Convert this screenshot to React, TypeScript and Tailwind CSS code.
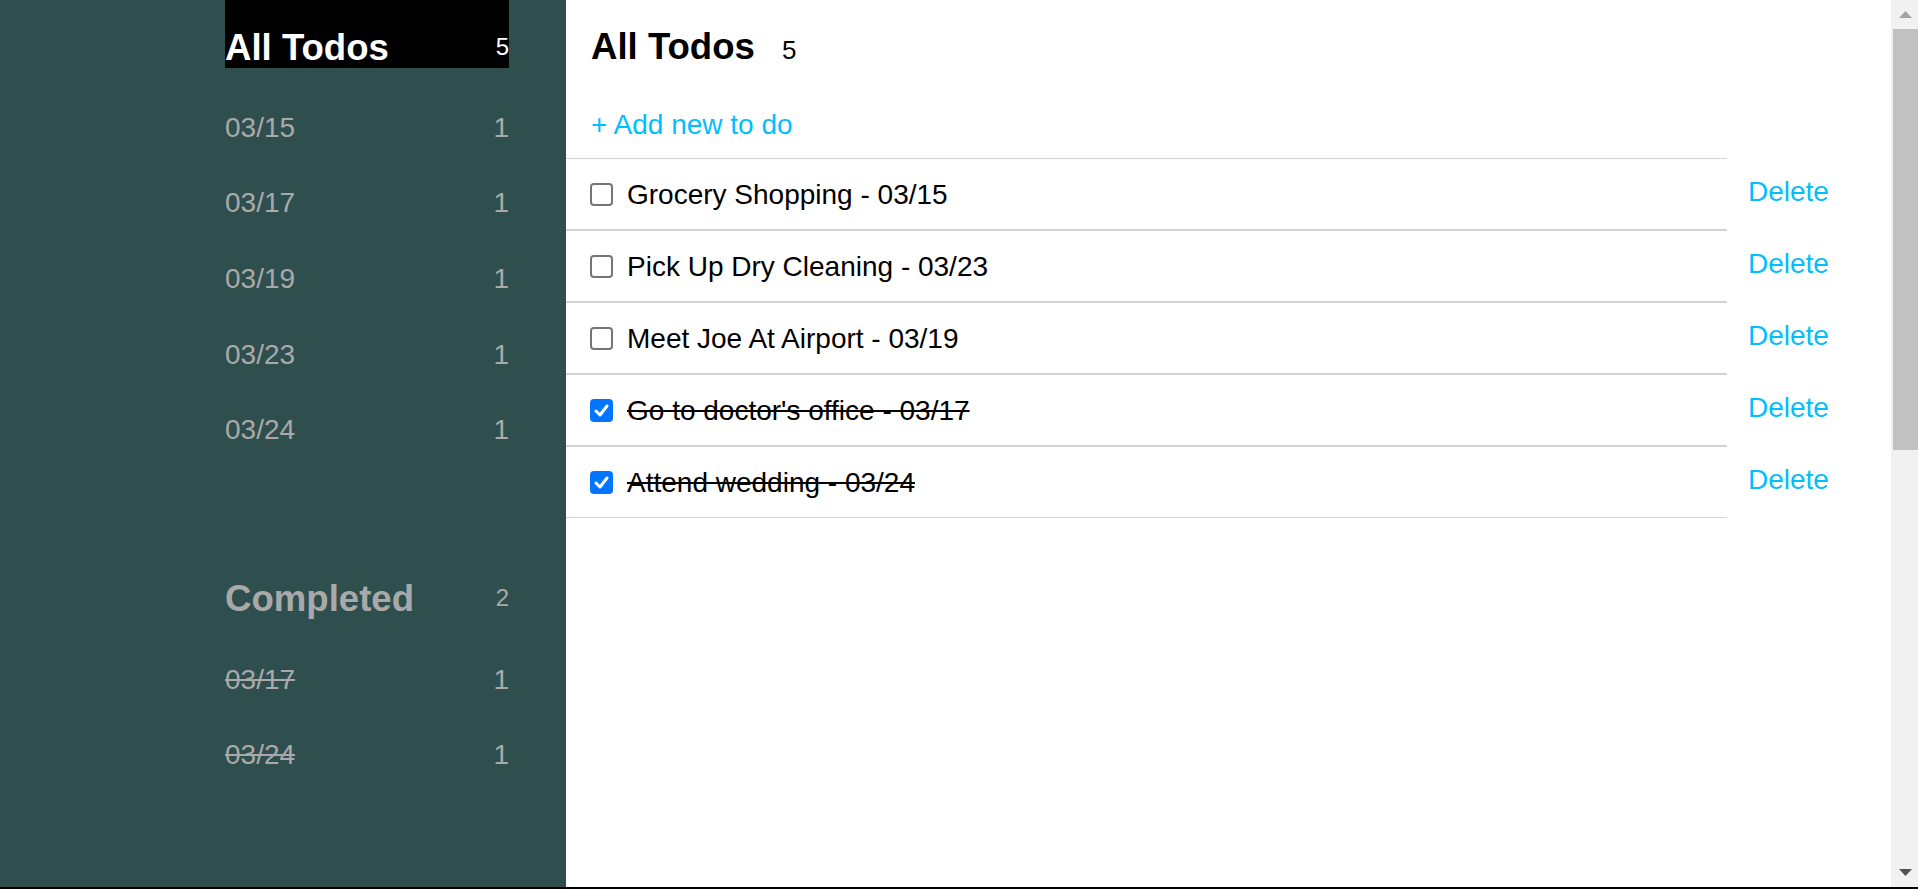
import React from "react";

const dates: [string, number][] = [
  ["03/15", 1],
  ["03/17", 1],
  ["03/19", 1],
  ["03/23", 1],
  ["03/24", 1],
];

const completed: [string, number][] = [
  ["03/17", 1],
  ["03/24", 1],
];

const todos = [
  { text: "Grocery Shopping - 03/15", done: false },
  { text: "Pick Up Dry Cleaning - 03/23", done: false },
  { text: "Meet Joe At Airport - 03/19", done: false },
  { text: "Go to doctor's office - 03/17", done: true },
  { text: "Attend wedding - 03/24", done: true },
];

function Check({ checked }: { checked: boolean }) {
  if (checked) {
    return (
      <span className="w-[23px] h-[23px] shrink-0 rounded-[4px] bg-[#0075ff] flex items-center justify-center">
        <svg width="17" height="17" viewBox="0 0 17 17" fill="none">
          <path d="M3 9 L7 13 L14 4" stroke="white" strokeWidth="3" strokeLinecap="round" strokeLinejoin="round" />
        </svg>
      </span>
    );
  }
  return <span className="w-[23px] h-[23px] shrink-0 rounded-[4px] border-2 border-[#767676] bg-white" />;
}

export default function App() {
  return (
    <div className="h-[889px] w-[1918px] flex flex-col overflow-hidden bg-white font-['Liberation_Sans','Arial',sans-serif]">
      <div className="flex flex-1 min-h-0">
        <aside className="w-[566px] shrink-0 bg-[#2f4f4f] pl-[225px] pr-[57px]">
          <div className="h-[68px] bg-black flex items-center justify-between pt-[26px]">
            <span className="text-[36.6px] leading-[41px] font-bold text-white">All Todos</span>
            <span className="text-[24px] leading-[28px] text-white">5</span>
          </div>
          <ul className="mt-[21px]">
            {dates.map(([d, n]) => (
              <li key={d} className="h-[75.6px] pt-[2px] flex items-center justify-between text-[28px] leading-[32px] text-[#a9a9a9]">
                <span>{d}</span>
                <span>{n}</span>
              </li>
            ))}
          </ul>
          <div className="mt-[84px] h-[68px] flex items-center justify-between pt-[27px]">
            <span className="text-[36.6px] leading-[41px] font-bold text-[#a9a9a9]">Completed</span>
            <span className="text-[24px] leading-[28px] text-[#a9a9a9]">2</span>
          </div>
          <ul className="mt-[22px]">
            {completed.map(([d, n]) => (
              <li key={d} className="h-[75.6px] pt-[2px] flex items-center justify-between text-[28px] leading-[32px] text-[#a9a9a9]">
                <span className="line-through">{d}</span>
                <span>{n}</span>
              </li>
            ))}
          </ul>
        </aside>

        <main className="flex-1 min-w-0 pt-[26px]">
          <div className="pl-[25px] flex items-baseline">
            <h1 className="text-[36.6px] leading-[41px] font-bold text-black">All Todos</h1>
            <span className="ml-[27px] text-[26px] leading-[30px] text-black">5</span>
          </div>
          <div className="pl-[25px] mt-[42px] text-[28px] leading-[32px] text-[#00bfff]">+ Add new to do</div>
          <ul className="mt-[17px]">
            {todos.map((t) => (
              <li key={t.text} className="flex items-center">
                <div className="w-[1161px] h-[72px] border-y border-[#d3d3d3] flex items-center pl-[24px] gap-[14px]">
                  <Check checked={t.done} />
                  <span className={"mt-[2px] text-[28px] leading-[32px] text-black" + (t.done ? " line-through" : "")}>{t.text}</span>
                </div>
                <span className="ml-[21px] pb-[4px] text-[28px] leading-[32px] text-[#00bfff]">Delete</span>
              </li>
            ))}
          </ul>
        </main>

        <div className="w-[27px] shrink-0 bg-[#f1f1f1] flex flex-col">
          <div className="h-[29px] flex items-center justify-center pl-[2px]">
            <svg width="13" height="7" viewBox="0 0 13 7">
              <polygon points="6.5,0 13,7 0,7" fill="#a3a3a3" />
            </svg>
          </div>
          <div className="ml-[2px] h-[421px] bg-[#c1c1c1]" />
          <div className="flex-1" />
          <div className="h-[29px] flex items-center justify-center pl-[2px]">
            <svg width="13" height="7" viewBox="0 0 13 7">
              <polygon points="0,0 13,0 6.5,7" fill="#505050" />
            </svg>
          </div>
        </div>
      </div>
      <div className="h-[2px] bg-black shrink-0" />
    </div>
  );
}
